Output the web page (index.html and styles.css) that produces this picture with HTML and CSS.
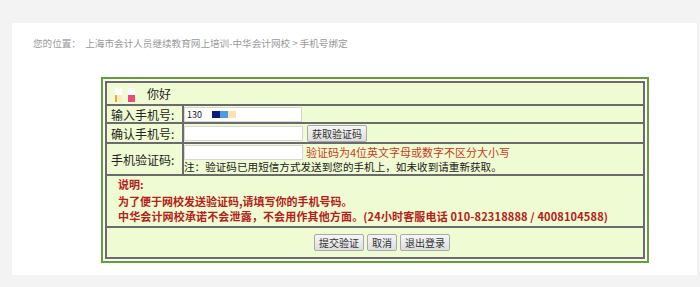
FILE: index.html
```html
<!DOCTYPE html>
<html lang="zh-CN">
<head>
  <meta charset="UTF-8" />
  <title>手机号绑定</title>
  <link rel="stylesheet" href="styles.css">
</head>
<body>
  <div class="panel">
    <div class="crumb">您的位置：&nbsp; 上海市会计人员继续教育网上培训-中华会计网校 &gt; 手机号绑定</div>

    <div class="frame">
      <div class="bind">
        <div class="cell hello">
          <span class="avatar">
            <span class="px a1"></span><span class="px a2"></span>
            <span class="px a3"></span><span class="px a4"></span>
          </span>
          你好
        </div>

        <div class="cell lbl">输入手机号:</div>
        <div class="cell val">
          <div class="field filled">130 <span class="mask m1"></span><span class="mask m2"></span><span class="mask m3"></span></div>
        </div>

        <div class="cell lbl">确认手机号:</div>
        <div class="cell val">
          <div class="field"></div>
          <button class="btn" type="button">获取验证码</button>
        </div>

        <div class="cell lbl">手机验证码:</div>
        <div class="cell val stack">
          <div class="line">
            <div class="field"></div>
            <span class="hint">验证码为4位英文字母或数字不区分大小写</span>
          </div>
          <div class="note">注：验证码已用短信方式发送到您的手机上，如未收到请重新获取。</div>
        </div>

        <div class="cell wide notice">
          <p class="title">说明:</p>
          <p>为了便于网校发送验证码,请填写你的手机号码。</p>
          <p class="last">中华会计网校承诺不会泄露，不会用作其他方面。(24小时客服电话 010-82318888 / 4008104588)</p>
        </div>

        <div class="cell wide actions">
          <button class="btn" type="button">提交验证</button>
          <button class="btn" type="button">取消</button>
          <button class="btn" type="button">退出登录</button>
        </div>
      </div>
    </div>
  </div>
</body>
</html>
```

FILE: styles.css
```css
:root {
  --page-bg: #f3f3f3;
  --cell-bg: #effbd2;
  --line: #6b6b6b;
  --green: #64a034;
  --red: #b5201a;
}

body {
  margin: 0;
  background: var(--page-bg);
  font-family: "Noto Sans CJK SC", "Noto Sans", sans-serif;
  color: #222;
}

.panel {
  margin: 23px 3px 0 12px;
  height: 252px;
  background: #fff;
  overflow: hidden;
}

.crumb {
  padding: 13px 0 0 21px;
  font-size: 9.6px;
  line-height: 14px;
  color: #999;
  white-space: nowrap;
}

.frame {
  margin: 27px 0 0 89px;
  border: 2px solid var(--green);
  padding: 2px;
  box-sizing: border-box;
  width: 548px;
}

.bind {
  display: grid;
  grid-template-columns: 75px 1fr;
  grid-template-rows: 21px 16px 18px 30px 50px 29px;
  gap: 2px;
  border: 2px solid var(--line);
  background: var(--line);
}

.cell {
  background: var(--cell-bg);
  font-size: 11px;
  display: flex;
  align-items: center;
  min-width: 0;
}

.hello {
  grid-column: 1 / 3;
  font-size: 12px;
  padding-left: 8px;
}

.avatar {
  display: inline-grid;
  grid-template-columns: 7px 7px;
  grid-template-rows: 7px 7px;
  column-gap: 6px;
  margin-right: 12px;
  margin-top: 2px;
}

.px { display: block; }
.a1 { background: #fff; }
.a2 { background: #fff; }
.a3 { background: #f7efc0; border-left: 2px solid #f3a33a; box-sizing: border-box; }
.a4 { background: #ec4a78; }

.lbl {
  padding-left: 4px;
  font-size: 12px;
  white-space: nowrap;
}

.val {
  gap: 4px;
}

.field {
  width: 115px;
  height: 13px;
  background: #fff;
  border: 1px solid #d6d6d6;
  flex: none;
  font-size: 9px;
  line-height: 13px;
  padding-left: 2px;
  box-sizing: content-box;
  display: flex;
  align-items: center;
}

.filled {
  width: 114px;
}

.mask {
  display: inline-block;
  width: 8px;
  height: 7px;
}

.m1 { background: #0c1a7a; margin-left: 10px; }
.m2 { background: #4a9be6; }
.m3 { background: #fbe3b0; }

.stack {
  flex-direction: column;
  align-items: flex-start;
  justify-content: center;
  gap: 0;
}

.line {
  display: flex;
  align-items: center;
  gap: 3px;
}

.hint {
  color: #cc3a22;
  font-size: 11px;
  white-space: nowrap;
}

.note {
  font-size: 10.6px;
  line-height: 14px;
  white-space: nowrap;
}

.wide {
  grid-column: 1 / 3;
}

.notice {
  flex-direction: column;
  align-items: flex-start;
  justify-content: flex-start;
  padding: 0 0 0 11px;
  color: var(--red);
  font-weight: bold;
}

.notice p {
  margin: 0;
  line-height: 15px;
  white-space: nowrap;
}

.notice .title {
  line-height: 16px;
  margin-bottom: 2px;
}

.notice .last {
  letter-spacing: 0.15px;
}

.actions {
  justify-content: center;
  gap: 3px;
  padding-left: 14px;
}

.btn {
  height: 17px;
  padding: 0 4px;
  font-family: inherit;
  font-size: 10px;
  color: #333;
  border: 1px solid #a9a9a9;
  border-radius: 2px;
  background: linear-gradient(#f6f6f6, #dedede);
  cursor: pointer;
}
```
